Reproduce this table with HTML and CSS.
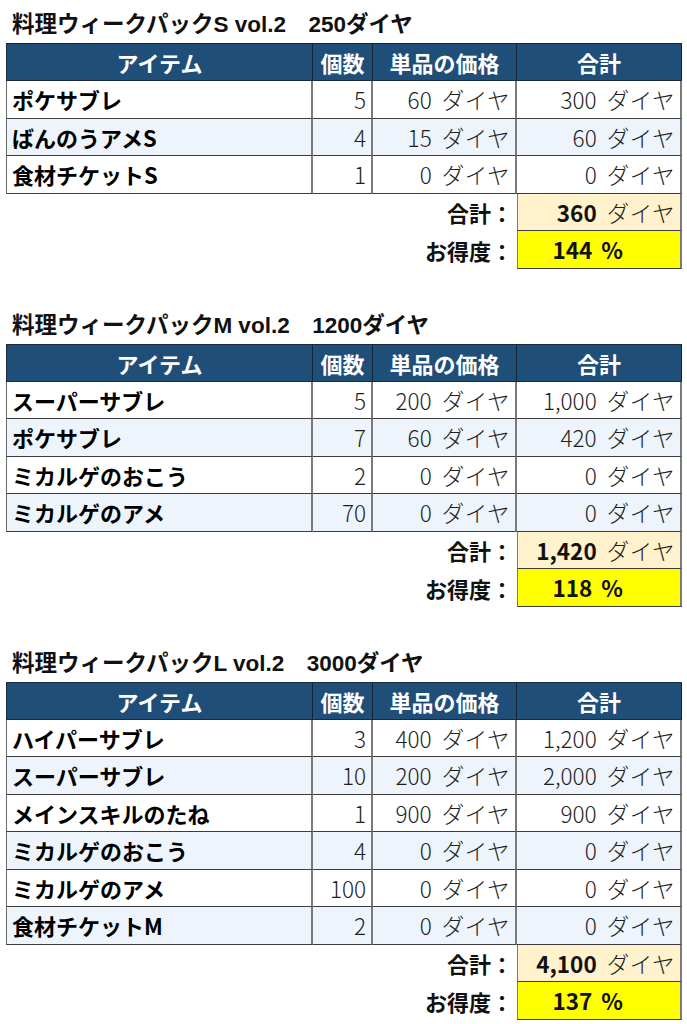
FILE: index.html
```html
<!DOCTYPE html>
<html lang="ja">
<head>
<meta charset="utf-8">
<title>料理ウィークパック vol.2</title>
<link rel="stylesheet" href="styles.css">
</head>
<body>
<main class="page">

<section class="pack">
  <h2 class="title">料理ウィークパックS vol.2　250ダイヤ</h2>
  <div class="tbl">
    <div class="row head"><div class="c">アイテム</div><div class="c">個数</div><div class="c">単品の価格</div><div class="c">合計</div></div>
    <div class="row"><div class="c name">ポケサブレ</div><div class="c num">5</div><div class="c num">60<span class="u">ダイヤ</span></div><div class="c num">300<span class="u">ダイヤ</span></div></div>
    <div class="row alt"><div class="c name">ばんのうアメS</div><div class="c num">4</div><div class="c num">15<span class="u">ダイヤ</span></div><div class="c num">60<span class="u">ダイヤ</span></div></div>
    <div class="row"><div class="c name">食材チケットS</div><div class="c num">1</div><div class="c num">0<span class="u">ダイヤ</span></div><div class="c num">0<span class="u">ダイヤ</span></div></div>
  </div>
  <div class="summary">
    <div class="srow"><div class="label">合計：</div><div class="val total"><b>360</b><span class="u">ダイヤ</span></div></div>
    <div class="srow"><div class="label">お得度：</div><div class="val deal"><b>144</b><b class="pct">%</b></div></div>
  </div>
</section>

<section class="pack">
  <h2 class="title">料理ウィークパックM vol.2　1200ダイヤ</h2>
  <div class="tbl">
    <div class="row head"><div class="c">アイテム</div><div class="c">個数</div><div class="c">単品の価格</div><div class="c">合計</div></div>
    <div class="row"><div class="c name">スーパーサブレ</div><div class="c num">5</div><div class="c num">200<span class="u">ダイヤ</span></div><div class="c num">1,000<span class="u">ダイヤ</span></div></div>
    <div class="row alt"><div class="c name">ポケサブレ</div><div class="c num">7</div><div class="c num">60<span class="u">ダイヤ</span></div><div class="c num">420<span class="u">ダイヤ</span></div></div>
    <div class="row"><div class="c name">ミカルゲのおこう</div><div class="c num">2</div><div class="c num">0<span class="u">ダイヤ</span></div><div class="c num">0<span class="u">ダイヤ</span></div></div>
    <div class="row alt"><div class="c name">ミカルゲのアメ</div><div class="c num">70</div><div class="c num">0<span class="u">ダイヤ</span></div><div class="c num">0<span class="u">ダイヤ</span></div></div>
  </div>
  <div class="summary">
    <div class="srow"><div class="label">合計：</div><div class="val total"><b>1,420</b><span class="u">ダイヤ</span></div></div>
    <div class="srow"><div class="label">お得度：</div><div class="val deal"><b>118</b><b class="pct">%</b></div></div>
  </div>
</section>

<section class="pack">
  <h2 class="title">料理ウィークパックL vol.2　3000ダイヤ</h2>
  <div class="tbl">
    <div class="row head"><div class="c">アイテム</div><div class="c">個数</div><div class="c">単品の価格</div><div class="c">合計</div></div>
    <div class="row"><div class="c name">ハイパーサブレ</div><div class="c num">3</div><div class="c num">400<span class="u">ダイヤ</span></div><div class="c num">1,200<span class="u">ダイヤ</span></div></div>
    <div class="row alt"><div class="c name">スーパーサブレ</div><div class="c num">10</div><div class="c num">200<span class="u">ダイヤ</span></div><div class="c num">2,000<span class="u">ダイヤ</span></div></div>
    <div class="row"><div class="c name">メインスキルのたね</div><div class="c num">1</div><div class="c num">900<span class="u">ダイヤ</span></div><div class="c num">900<span class="u">ダイヤ</span></div></div>
    <div class="row alt"><div class="c name">ミカルゲのおこう</div><div class="c num">4</div><div class="c num">0<span class="u">ダイヤ</span></div><div class="c num">0<span class="u">ダイヤ</span></div></div>
    <div class="row"><div class="c name">ミカルゲのアメ</div><div class="c num">100</div><div class="c num">0<span class="u">ダイヤ</span></div><div class="c num">0<span class="u">ダイヤ</span></div></div>
    <div class="row alt"><div class="c name">食材チケットM</div><div class="c num">2</div><div class="c num">0<span class="u">ダイヤ</span></div><div class="c num">0<span class="u">ダイヤ</span></div></div>
  </div>
  <div class="summary">
    <div class="srow"><div class="label">合計：</div><div class="val total"><b>4,100</b><span class="u">ダイヤ</span></div></div>
    <div class="srow"><div class="label">お得度：</div><div class="val deal"><b>137</b><b class="pct">%</b></div></div>
  </div>
</section>

</main>
</body>
</html>
```

FILE: styles.css
```css
body {
  margin: 0;
  background: #ffffff;
  font-family: "Noto Sans CJK JP", "Noto Sans", sans-serif;
  color: #111111;
}

.page {
  padding: 10px 5px 0 6px;
}

.pack + .pack {
  margin-top: 42px;
}

.title {
  margin: 0 0 3px 6px;
  height: 30px;
  font-family: "Liberation Sans", "Noto Sans CJK JP", sans-serif;
  font-size: 22.5px;
  line-height: 30px;
  font-weight: 700;
  color: #111111;
  white-space: pre;
}

.tbl {
  width: 676px;
}

.row {
  display: grid;
  grid-template-columns: 307px 60px 144px 165px;
  height: 37.5px;
}

.row.head {
  height: 38px;
  background: #1f4e79;
}

.row.alt {
  background: #edf4fb;
}

.c {
  box-sizing: border-box;
  display: flex;
  align-items: center;
  border-right: 2px solid #7a7a7a;
  border-bottom: 1px solid #3c3c3c;
  font-size: 22px;
  line-height: 1;
  white-space: nowrap;
  overflow: hidden;
}

.c:first-child {
  border-left: 1px solid #6a6a6a;
}

.head .c {
  justify-content: center;
  color: #ffffff;
  font-weight: 700;
  border-top: 1px solid #1a2a3a;
  border-right: 1px solid #152433;
  border-bottom: 1px solid #1a2a3a;
}

.head .c:first-child {
  border-left: 1px solid #1a2a3a;
}

.name {
  padding-left: 5px;
  font-weight: 700;
  color: #000000;
}

.num {
  justify-content: flex-end;
  padding-right: 5px;
  font-weight: 300;
  font-size: 22.5px;
  color: #1e1e1e;
}

.u {
  margin-left: 10px;
  letter-spacing: 0.5px;
}

.summary {
  width: 676px;
}

.srow {
  display: grid;
  grid-template-columns: 511px 165px;
  height: 37.5px;
}

.label {
  display: flex;
  align-items: center;
  justify-content: flex-end;
  padding-right: 4px;
  font-size: 22px;
  font-weight: 700;
  color: #111111;
}

.val {
  box-sizing: border-box;
  display: flex;
  align-items: center;
  justify-content: flex-end;
  border-left: 1px solid #7a7a7a;
  border-right: 2px solid #7a7a7a;
  border-bottom: 1px solid #3c3c3c;
  font-size: 22.5px;
  font-weight: 300;
  color: #1e1e1e;
  white-space: nowrap;
}

.val b {
  font-weight: 700;
  color: #111111;
}

.val .pct {
  margin-left: 9px;
}

.total {
  background: #fff2cc;
  padding-right: 5px;
}

.deal {
  background: #ffff00;
  padding-right: 57px;
}
```
